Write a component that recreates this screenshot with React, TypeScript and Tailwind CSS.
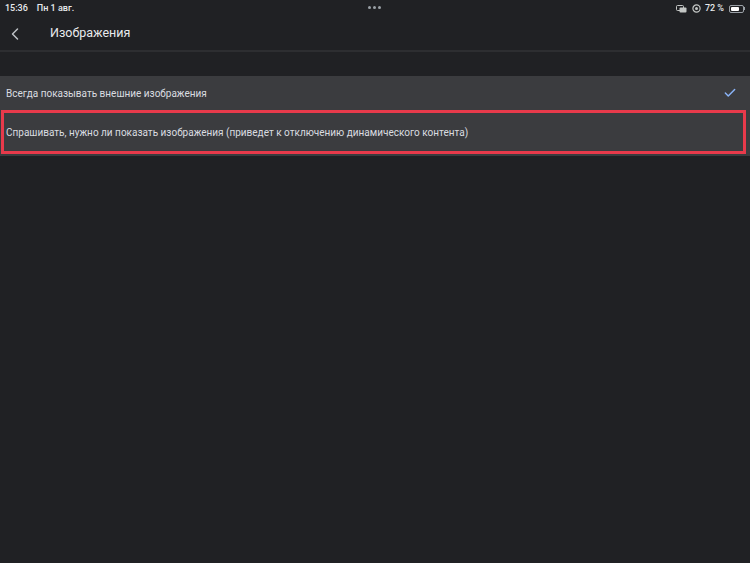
import { ChevronLeft, Check } from 'lucide-react';

export default function App() {
  return (
    <div
      className="w-[750px] h-[563px] bg-[#202124] text-[#e8eaed] overflow-hidden"
      style={{ fontFamily: 'Roboto, "Noto Sans", sans-serif' }}
    >
      {/* status bar */}
      <div className="relative h-[17px] flex items-center px-[5px] text-[9px] font-medium text-[#e8eaed]">
        <span>15:36</span>
        <span className="ml-[9px]">Пн 1 авг.</span>
        <div className="absolute left-[368px] top-[6px] flex gap-[2px]">
          <span className="w-[3px] h-[3px] rounded-full bg-[#9aa0a6]" />
          <span className="w-[3px] h-[3px] rounded-full bg-[#9aa0a6]" />
          <span className="w-[3px] h-[3px] rounded-full bg-[#9aa0a6]" />
        </div>
        <div className="ml-auto flex items-center gap-[3px]">
          <svg width="11" height="8" viewBox="0 0 11 8" className="text-[#c4c7c5]">
            <rect x="0.5" y="0.5" width="7" height="5" rx="1" fill="none" stroke="currentColor" />
            <rect x="3.5" y="2.5" width="7" height="5" rx="1" fill="currentColor" />
          </svg>
          <svg width="9" height="9" viewBox="0 0 9 9" className="text-[#c4c7c5] ml-[2px]">
            <circle cx="4.5" cy="4.5" r="3.6" fill="none" stroke="currentColor" strokeWidth="1.2" />
            <circle cx="4.5" cy="4.5" r="1.5" fill="currentColor" />
          </svg>
          <span className="ml-[1px]">72 %</span>
          <div className="ml-[2px] flex items-center">
            <div className="w-[15px] h-[8px] rounded-[2px] border border-[#9aa0a6] p-[1px]">
              <div className="h-full w-[72%] bg-white rounded-[1px]" />
            </div>
            <div className="w-[1px] h-[3px] bg-[#9aa0a6]" />
          </div>
        </div>
      </div>

      {/* header */}
      <div className="h-[35px] flex items-center border-b-2 border-[#2d2e31]">
        <ChevronLeft className="ml-[5px] w-[20px] h-[20px] text-[#bdc1c6]" strokeWidth={1.8} />
        <span className="ml-[25px] text-[12.5px] text-[#e8eaed]">Изображения</span>
      </div>

      <div className="h-[24px]" />

      {/* options */}
      <div className="bg-[#3b3c3f]">
        <div className="h-[34px] flex items-center pl-[6px] pr-[13px] text-[10px] text-[#dadce0]">
          <span>Всегда показывать внешние изображения</span>
          <Check className="ml-auto w-[14px] h-[14px] text-[#8ab4f8]" strokeWidth={2.5} />
        </div>
        <div className="pl-[1px] pr-[4px] pb-[2px]">
          <div className="h-[44px] flex items-center border-[3px] border-[#e83a4b] pl-[2px] text-[10px] text-[#dadce0]">
            <span>Спрашивать, нужно ли показать изображения (приведет к отключению динамического контента)</span>
          </div>
        </div>
      </div>
    </div>
  );
}
